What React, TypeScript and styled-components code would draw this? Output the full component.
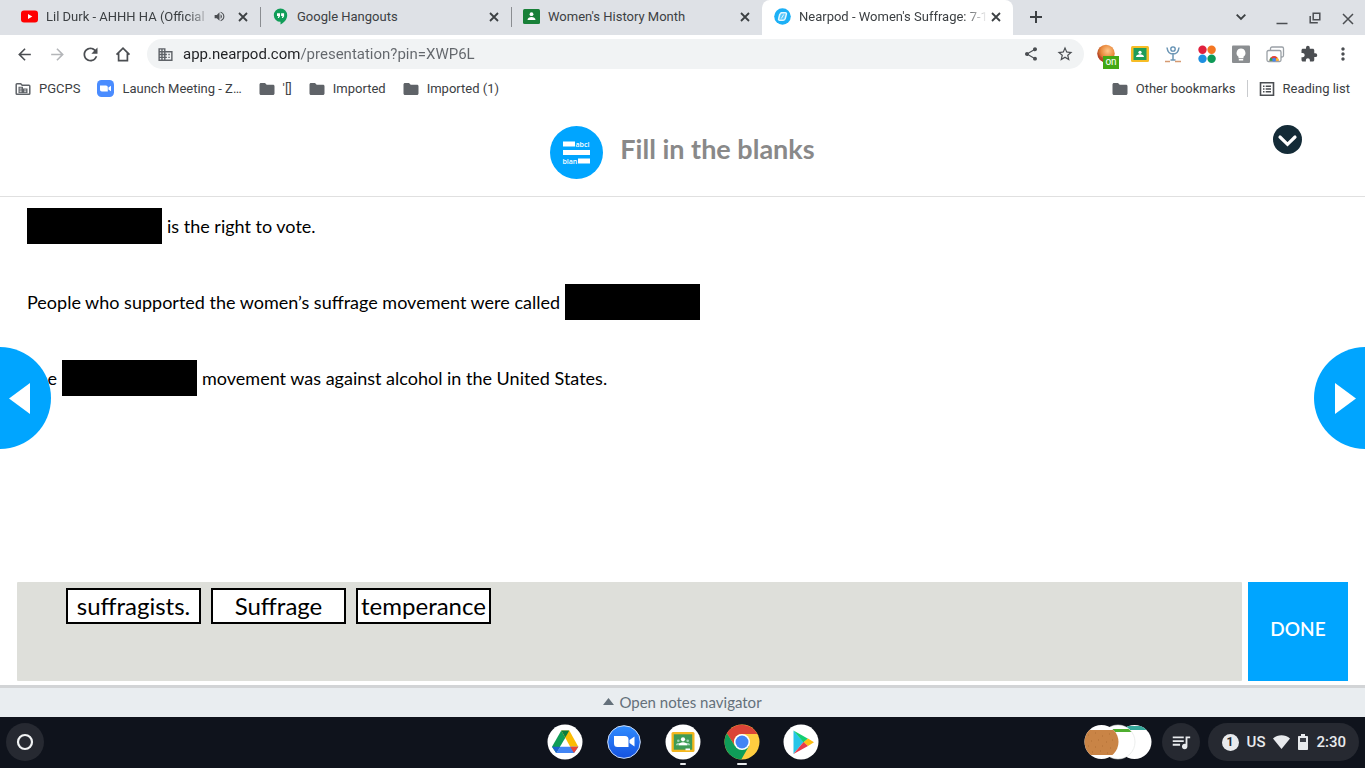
import React from "react";
import styled, { createGlobalStyle } from "styled-components";
import {
  MdArrowBack,
  MdArrowForward,
  MdDomain,
  MdExtension,
  MdMoreVert,
  MdQueueMusic,
  MdRefresh,
  MdShare,
  MdStarBorder,
  MdVolumeUp,
} from "react-icons/md";

const GlobalStyle = createGlobalStyle`
  *, *::before, *::after { box-sizing: border-box; }
  body { margin: 0; background: #fff; }
  button, input { font: inherit; color: inherit; border: 0; padding: 0; margin: 0; background: none; }
  a { color: inherit; text-decoration: none; }
  svg { display: block; flex: none; }
`;

const Screen = styled.div`
  display: flex;
  flex-direction: column;
  min-height: 100vh;
  font-family: Roboto, "Liberation Sans", sans-serif;
  color: #3c4043;
`;

/* ---------- browser chrome ---------- */

const TabStrip = styled.div`
  display: flex;
  height: 35px;
  padding-left: 9px;
  background: #dee1e6;
`;

const Tab = styled.div<{ $active?: boolean; $divided?: boolean }>`
  position: relative;
  display: flex;
  align-items: center;
  flex: 0 1 251px;
  min-width: 0;
  padding: 0 9px 2px 12px;
  border-radius: 8px 8px 0 0;
  background: ${(p) => (p.$active ? "#fff" : "transparent")};

  &::after {
    content: "";
    display: ${(p) => (p.$divided ? "block" : "none")};
    position: absolute;
    right: -1px;
    top: 7px;
    width: 1px;
    height: 20px;
    background: #8a8d91;
  }
`;

const TabButton = styled.button<{ $fade?: boolean }>`
  display: flex;
  align-items: center;
  gap: 8px;
  flex: 1;
  min-width: 0;
  overflow: hidden;
  white-space: nowrap;
  font-size: 13px;
  line-height: 20px;
  text-align: left;
  mask-image: ${(p) =>
    p.$fade ? "linear-gradient(to left, transparent, #000 24px)" : "none"};
`;

const IconButton = styled.button<{ $size?: number; $muted?: boolean }>`
  display: flex;
  align-items: center;
  justify-content: center;
  flex: none;
  width: ${(p) => p.$size ?? 16}px;
  height: ${(p) => p.$size ?? 16}px;
  color: ${(p) => (p.$muted ? "#b4b6b9" : "#4b4e52")};
`;

const TabTools = styled.div`
  display: flex;
  align-items: center;
  gap: 8px;
`;

const NewTab = styled.div`
  display: flex;
  align-items: center;
  padding: 0 0 2px 13px;
`;

const WindowControls = styled.div`
  display: flex;
  align-items: center;
  gap: 17px;
  margin-left: auto;
  padding: 0 9px 2px 0;
`;

const TabSearch = styled(IconButton)`
  margin-right: 8px;
`;

const Toolbar = styled.div`
  display: flex;
  align-items: center;
  height: 38px;
  padding: 0 12px 0 14px;
`;

const NavButtons = styled.div`
  display: flex;
  gap: 13px;
  padding-right: 14px;
`;

const AddressBar = styled.div`
  display: flex;
  align-items: center;
  flex: 1;
  min-width: 0;
  height: 30px;
  padding: 0 10px;
  border-radius: 15px;
  background: #f1f3f4;
`;

const AddressInput = styled.input`
  flex: 1;
  min-width: 0;
  height: 24px;
  margin: 0 9px;
  outline: 0;
  font-size: 15px;
  line-height: 24px;
  color: #3c4043;
  background: linear-gradient(90deg, #202124 117px, #63676c 117px);
  background-clip: text;
  -webkit-background-clip: text;
  -webkit-text-fill-color: transparent;
`;

const AddressActions = styled.div`
  display: flex;
  gap: 16px;
`;

const Extensions = styled.div`
  display: flex;
  align-items: center;
  gap: 14px;
  padding-left: 11px;
`;

const ExtensionButton = styled(IconButton)`
  position: relative;
  width: 20px;
  height: 20px;
`;

const OnBadge = styled.span`
  position: absolute;
  left: 8px;
  top: 12px;
  width: 16px;
  height: 13px;
  background: #43a814;
  color: #fff;
  font-size: 10px;
  line-height: 12px;
  text-align: center;
`;

const Bookmarks = styled.nav`
  display: flex;
  align-items: center;
  height: 31px;
  padding: 0 15px;
  font-size: 13px;
  line-height: 20px;
  white-space: nowrap;
`;

const BookmarkGroup = styled.div<{ $end?: boolean }>`
  display: flex;
  align-items: center;
  gap: ${(p) => (p.$end ? 11 : 17)}px;
  margin-left: ${(p) => (p.$end ? "auto" : 0)};
`;

const Bookmark = styled.a`
  display: flex;
  align-items: center;
  gap: 8px;
`;

const BookmarkDivider = styled.span`
  width: 1px;
  height: 17px;
  background: #c9cbce;
`;

/* ---------- lesson ---------- */

const Lesson = styled.main`
  position: relative;
  display: flex;
  flex-direction: column;
  flex: 1;
  font-family: Lato, "Open Sans", sans-serif;
`;

const LessonHeader = styled.header`
  display: grid;
  grid-template-columns: 1fr auto 1fr;
  align-items: start;
  height: 93px;
  padding: 21px 63px 0;
  border-bottom: 1px solid #e0e0e0;
`;

const LessonTitle = styled.div`
  grid-column: 2;
  display: flex;
  gap: 17px;
`;

const Heading = styled.h1`
  margin: 0;
  color: #898989;
  font-size: 27px;
  font-weight: 700;
  line-height: 48px;
`;

const Collapse = styled.button`
  justify-self: end;
  width: 29px;
  height: 29px;
`;

const Sentences = styled.section`
  display: flex;
  flex-direction: column;
  gap: 40px;
  padding: 11px 27px;
`;

const Sentence = styled.p`
  display: flex;
  align-items: center;
  gap: 5px;
  height: 36px;
  margin: 0;
  color: #000;
  font-size: 18px;
  line-height: 36px;
  white-space: nowrap;
`;

const Blank = styled.button`
  flex: none;
  width: 135px;
  height: 36px;
  background: #000;
`;

const SlideArrow = styled.button<{ $side: "left" | "right" }>`
  position: absolute;
  top: 243px;
  ${(p) => p.$side}: 0;
  display: flex;
  align-items: center;
  justify-content: center;
  width: 51px;
  height: 102px;
  border-radius: ${(p) =>
    p.$side === "left" ? "0 51px 51px 0" : "51px 0 0 51px"};
  background: #00a5ff;
`;

const ArrowGlyph = styled.svg<{ $side: "left" | "right" }>`
  margin-${(p) => (p.$side === "left" ? "right" : "left")}: 12px;
`;

const AnswerArea = styled.section`
  display: flex;
  gap: 6px;
  height: 99px;
  margin: auto 17px 4px;
`;

const WordBank = styled.div`
  display: flex;
  align-items: flex-start;
  gap: 10px;
  flex: 1;
  padding: 6px 49px;
  border-radius: 1px;
  background: #dedfda;
`;

const Word = styled.button`
  width: 135px;
  height: 36px;
  border: 2px solid #000;
  background: #fff;
  color: #000;
  font-size: 24px;
  line-height: 30px;
  text-align: center;
  white-space: nowrap;
`;

const Done = styled.button`
  width: 100px;
  padding-bottom: 6px;
  background: #00a5ff;
  color: #fff;
  font-size: 19px;
  font-weight: 600;
`;

const NotesToggle = styled.button`
  display: flex;
  align-items: center;
  justify-content: center;
  gap: 5px;
  height: 32px;
  padding-bottom: 2px;
  border-top: 3px solid #d2d4d6;
  background: #e9edf0;
  color: #64707a;
  font-size: 15px;
  line-height: 24px;
`;

/* ---------- shelf ---------- */

const Shelf = styled.footer`
  display: grid;
  grid-template-columns: 1fr auto 1fr;
  align-items: center;
  height: 51px;
  padding: 0 6px 1px;
  background: #0f131c;
`;

const RoundButton = styled.button`
  display: flex;
  align-items: center;
  justify-content: center;
  width: 38px;
  height: 38px;
  border-radius: 50%;
  background: #262931;
  color: #e8eaed;
`;

const Apps = styled.div`
  display: flex;
  gap: 23px;
`;

const AppButton = styled.button<{ $bar?: number }>`
  position: relative;
  width: 36px;
  height: 36px;

  &::after {
    content: "";
    position: absolute;
    left: calc(50% - ${(p) => (p.$bar ?? 0) / 2}px);
    top: 39px;
    width: ${(p) => p.$bar ?? 0}px;
    height: 2px;
    border-radius: 1px;
    background: #e8eaed;
  }
`;

const Tray = styled.div`
  display: flex;
  align-items: center;
  justify-content: flex-end;
  gap: 8px;
`;

const Recents = styled.button`
  width: 68px;
  height: 36px;
  margin-right: 2px;
`;

const Status = styled.button`
  display: flex;
  align-items: center;
  gap: 8px;
  height: 38px;
  padding: 0 13px 0 14px;
  border-radius: 19px;
  background: #262931;
  color: #e8eaed;
  font-size: 15px;
  font-weight: 500;
`;

const Count = styled.span`
  width: 17px;
  height: 17px;
  border-radius: 50%;
  background: #e8eaed;
  color: #262931;
  font-size: 12px;
  font-weight: 700;
  line-height: 17px;
`;

/* ---------- drawings ---------- */

const YouTubeLogo = () => (
  <svg width="17" height="17" viewBox="0 0 17 17">
    <rect y="2.5" width="17" height="12" rx="3" fill="#f00" />
    <path d="M7 6v5l4.3-2.5z" fill="#fff" />
  </svg>
);

const HangoutsLogo = () => (
  <svg width="17" height="17" viewBox="0 0 17 17">
    <path d="M8.5.5a6.7 6.7 0 0 0-6.7 6.8 6.6 6.6 0 0 0 6.7 6.5v2.7c3.7-1.8 6.7-5.3 6.7-9.2A6.7 6.7 0 0 0 8.5.5z" fill="#109d58" />
    <path d="M5 5.200h3v3L6.800 10H5.700l.8-1.900H5zM9.100 5.200h3v3L10.900 10H9.800l.8-1.900H9.100z" fill="#fff" />
  </svg>
);

const ClassroomTabLogo = () => (
  <svg width="17" height="15" viewBox="0 0 17 15">
    <rect width="17" height="15" rx="1.5" fill="#188038" />
    <circle cx="8.5" cy="5.200" r="1.9" fill="#fff" />
    <path d="M4.500 11c0-2 2-3 4-3s4 1 4 3z" fill="#fff" />
  </svg>
);

const NearpodLogo = () => (
  <svg width="17" height="17" viewBox="0 0 17 17">
    <circle cx="8.5" cy="8.5" r="8.300" fill="#1cb0f6" />
    <path d="M7.200 4.800h4.200c.8 0 1.200.5 1 1.200l-1.100 4.400c-.3 1.200-1 1.800-2.100 1.800H5.600c-.8 0-1.200-.5-1-1.200l1.100-4.500z" fill="#5cc8fa" stroke="#e2f6ff" strokeWidth="1.500" />
    <path d="M7.300 10.500l2.400-4" stroke="#e2f6ff" strokeWidth="1" />
  </svg>
);

const ZoomBookmarkLogo = () => (
  <svg width="17" height="17" viewBox="0 0 17 17">
    <rect width="17" height="17" rx="4.5" fill="#4a8cff" />
    <path d="M3 5.500h6a1.800 1.800 0 0 1 1.800 1.800v4.200H4.800A1.800 1.800 0 0 1 3 9.700zM11.400 7.500L14 5.700v5.600l-2.600-1.800z" fill="#fff" />
  </svg>
);

const FolderIcon = () => (
  <svg width="16" height="14" viewBox="0 0 16 14">
    <path d="M2 1h4l1.700 1.800H14c.8 0 1.500.6 1.500 1.400v7.300c0 .8-.7 1.500-1.500 1.500H2c-.8 0-1.500-.7-1.500-1.500v-9C.5 1.600 1.200 1 2 1z" fill="#5f6368" />
  </svg>
);

const ManagedFolderIcon = () => (
  <svg width="16" height="14" viewBox="0 0 16 14">
    <path d="M2 1.700h3.700l1.500 1.600H14c.5 0 .8.3.8.8v7.400c0 .5-.3.800-.8.800H2c-.5 0-.8-.3-.8-.8v-9c0-.5.3-.8.8-.8z" fill="none" stroke="#5f6368" strokeWidth="1.500" />
    <path d="M3.500 4.800H8V6.500h4.500v4.500h-9z" fill="#5f6368" />
    <path d="M4.600 6.200h2M4.600 8h2M4.600 9.700h2M9.200 8h2M9.200 9.700h2" stroke="#fff" strokeWidth=".8" />
  </svg>
);

const ReadingListIcon = () => (
  <svg width="16" height="16" viewBox="0 0 16 16" fill="none" stroke="#4b4e52">
    <path d="M1.500 1.700h13v12.600h-13z" strokeWidth="1.600" />
    <path d="M4 5.300h1.500M4 8h1.500M4 10.700h1.500M6.700 5.300H12M6.700 8H12M6.700 10.700H12" strokeWidth="1.400" />
  </svg>
);

const CloseTabIcon = () => (
  <svg width="16" height="16" viewBox="0 0 16 16" fill="none" stroke="#3c4043" strokeWidth="1.800">
    <path d="M4 4l8 8M12 4l-8 8" />
  </svg>
);

const PlusIcon = () => (
  <svg width="20" height="20" viewBox="0 0 20 20" fill="none" stroke="#3c4043" strokeWidth="2">
    <path d="M10 4v12M4 10h12" />
  </svg>
);

const TabSearchIcon = () => (
  <svg width="16" height="16" viewBox="0 0 16 16" fill="none" stroke="#3c4043" strokeWidth="1.900">
    <path d="M3.700 5.700L8 10l4.300-4.300" />
  </svg>
);

const HomeIcon = () => (
  <svg width="20" height="20" viewBox="0 0 20 20" fill="none" stroke="#4b4e52" strokeWidth="1.700">
    <path d="M3.500 10.700L10 4.200l6.500 6.500M5.600 9.200v7.400h8.800V9.200" />
  </svg>
);

const MinimizeIcon = () => (
  <svg width="16" height="16" viewBox="0 0 16 16">
    <path d="M2.500 14.500h11" stroke="#4b4e52" strokeWidth="1.500" />
  </svg>
);

const RestoreIcon = () => (
  <svg width="16" height="16" viewBox="0 0 16 16" fill="none" stroke="#4b4e52" strokeWidth="1.500">
    <path d="M6.200 4.200h6.600v6.600H6.200zM3.200 7v6.800h7.600" />
  </svg>
);

const CloseWindowIcon = () => (
  <svg width="16" height="16" viewBox="0 0 16 16">
    <path d="M3 5l10 10M13 5L3 15" stroke="#4b4e52" strokeWidth="1.500" />
  </svg>
);

const GlobeExtension = () => (
  <svg width="20" height="20" viewBox="0 0 20 20">
    <defs>
      <radialGradient id="globe" cx=".6" cy=".35" r=".7">
        <stop offset="0" stopColor="#ffc98a" />
        <stop offset=".55" stopColor="#e9893d" />
        <stop offset="1" stopColor="#a83a1d" />
      </radialGradient>
    </defs>
    <circle cx="11" cy="9.500" r="8.700" fill="url(#globe)" />
    <path d="M2.500 8c1 3 3 5 6 6l1 4c-4-.5-7-4-7-10z" fill="#b8402a" opacity=".6" />
  </svg>
);

const ClassroomExtension = () => (
  <svg width="20" height="20" viewBox="0 0 20 20">
    <rect x="2" y="2" width="18" height="16" rx="1.500" fill="#f7bd26" />
    <rect x="4.500" y="4" width="13" height="12" fill="#1f9d58" />
    <circle cx="11" cy="8.300" r="1.600" fill="#fff" />
    <path d="M7 13c0-2 2-2.800 4-2.800s4 .8 4 2.800z" fill="#fff" />
  </svg>
);

const FigureExtension = () => (
  <svg width="20" height="20" viewBox="0 0 20 20" fill="none">
    <path d="M4 3.500c.5 4 3 6.500 6 6.500s5.500-2.500 6-6.500M10 9v7M7.500 16h5" stroke="#6c96b5" strokeWidth="1.500" />
    <circle cx="10" cy="5" r="2.200" stroke="#5d8db1" strokeWidth="1.300" />
    <path d="M2 17.500h5M12 17.500h6" stroke="#d59a72" strokeWidth="1.500" />
  </svg>
);

const DotsExtension = () => (
  <svg width="20" height="20" viewBox="0 0 20 20">
    <circle cx="5.500" cy="5.700" r="4.200" fill="#e01f3d" />
    <circle cx="14.600" cy="5.700" r="4.200" fill="#f47621" />
    <circle cx="5.500" cy="14.800" r="4.200" fill="#1d8fe0" />
    <circle cx="14.600" cy="14.800" r="4.200" fill="#0e9a57" />
  </svg>
);

const BulbExtension = () => (
  <svg width="20" height="20" viewBox="0 0 20 20">
    <rect x="1" y="1.500" width="18" height="17.500" rx="1" fill="#8b8e91" />
    <path d="M10 4.500a4.500 4.500 0 0 0-2.500 8.200v1.500h5v-1.500A4.500 4.500 0 0 0 10 4.500zM7.800 15h4.400v1.500H7.800z" fill="#fff" />
  </svg>
);

const RemoteExtension = () => (
  <svg width="20" height="20" viewBox="0 0 20 20">
    <rect x="5.500" y="3" width="13" height="10" rx="1.500" fill="#fff" stroke="#9aa0a6" strokeWidth="1.300" />
    <rect x="2" y="6.500" width="14" height="11" rx="1.500" fill="#fff" stroke="#9aa0a6" strokeWidth="1.300" />
    <path d="M4.500 16.700a4.600 4.600 0 0 1 9.200 0z" fill="#e34133" />
    <path d="M4.500 16.700a4.600 4.600 0 0 1 1.300-3.200L9 16.700z" fill="#23a455" />
    <path d="M13.700 16.700a4.600 4.600 0 0 0-1.300-3.200L9 16.700z" fill="#f9bf2c" />
    <circle cx="9.100" cy="15.700" r="1.900" fill="#4285f4" />
  </svg>
);

const FillBlanksLogo = () => (
  <svg width="53" height="55" viewBox="0 0 53 55">
    <circle cx="26.500" cy="27.500" r="26.500" fill="#00a5ff" />
    <path d="M13 16.500h12v5H13zM13 25h27v5H13zM28 33.500h12v5H28z" fill="#fff" />
    <text x="25.500" y="21.500" fontFamily="Open Sans, sans-serif" fontSize="7" fontWeight="600" fill="#fff">abcl</text>
    <text x="12.500" y="38.500" fontFamily="Open Sans, sans-serif" fontSize="7" fontWeight="600" fill="#fff">blan</text>
  </svg>
);

const ChevronDisc = () => (
  <svg width="29" height="29" viewBox="0 0 29 29">
    <circle cx="14.500" cy="14.500" r="14.500" fill="#142b37" />
    <path d="M7 12l7.500 7.300L22 12" fill="none" stroke="#fff" strokeWidth="3.200" strokeLinecap="round" />
  </svg>
);

const DriveLogo = () => (
  <svg width="36" height="36" viewBox="0 0 36 36">
    <circle cx="18" cy="18" r="17.500" fill="#fff" />
    <path d="M14.300 6.500L5 22.700l4.200 6.300 9.300-15.500z" fill="#109d58" />
    <path d="M14.300 6.500h8l9 16.200h-8.100z" fill="#fbbc04" />
    <path d="M14.300 6.500h8l-4 7z" fill="#0a7d3e" />
    <path d="M9.200 29l4.200-6.300h18L27 29z" fill="#4285f4" />
    <path d="M5 22.700h8.400L9.200 29z" fill="#1c62d0" />
    <path d="M23.200 22.700h8.100L27 29z" fill="#ea4335" />
  </svg>
);

const ZoomLogo = () => (
  <svg width="36" height="36" viewBox="0 0 36 36">
    <defs>
      <linearGradient id="zoomBlue" x1="0" y1="0" x2="0" y2="1">
        <stop offset="0" stopColor="#2f8cff" />
        <stop offset="1" stopColor="#1552e0" />
      </linearGradient>
    </defs>
    <circle cx="18" cy="18" r="16.300" fill="url(#zoomBlue)" stroke="#cfe0fb" strokeWidth="1" />
    <path d="M8 12h11a3.500 3.500 0 0 1 3.500 3.500V23h-11A3.500 3.500 0 0 1 8 19.500zM23.500 16l5-3.600v10.200l-5-3.600z" fill="#fff" />
  </svg>
);

const ClassroomLogo = () => (
  <svg width="36" height="36" viewBox="0 0 36 36">
    <circle cx="18" cy="18" r="17.500" fill="#fff" />
    <rect x="6.500" y="8" width="23" height="20" rx="1.500" fill="#f4b71f" />
    <rect x="8.800" y="10.300" width="18.400" height="15.400" fill="#3f9b55" />
    <circle cx="18" cy="15.300" r="2.100" fill="#fff" />
    <circle cx="13.300" cy="16.800" r="1.300" fill="#9fd3b5" />
    <circle cx="22.700" cy="16.800" r="1.300" fill="#9fd3b5" />
    <path d="M10.800 21.300c0-1.800 1.500-2.300 3-2.300h8.400c1.500 0 3 .5 3 2.300z" fill="#9fd3b5" />
    <path d="M13.800 21.300c0-2.300 2-3 4.200-3s4.200.7 4.200 3z" fill="#fff" />
    <path d="M20.500 24.500H25v1.800h-4.500z" fill="#fff" />
  </svg>
);

const ChromeLogo = () => (
  <svg width="36" height="36" viewBox="0 0 36 36">
    <circle cx="18" cy="18" r="17.500" fill="#ffcd40" />
    <path d="M2.850 9.250A17.500 17.500 0 0 1 33.400 10H18a8 8 0 0 0-7 12z" fill="#db4437" />
    <path d="M2.850 9.250A17.500 17.500 0 0 0 17.300 35.500L25 22l-14 0z" fill="#0f9d58" />
    <circle cx="18" cy="18" r="8" fill="#fff" />
    <circle cx="18" cy="18" r="6.500" fill="#4285f4" />
  </svg>
);

const PlayLogo = () => (
  <svg width="36" height="36" viewBox="0 0 36 36">
    <circle cx="18" cy="18" r="17.500" fill="#fff" />
    <path d="M10.500 6.500L20.500 18l-10 12z" fill="#27c5e8" />
    <path d="M10.500 6.500L25 14.700l-4.500 3.800z" fill="#13ce72" />
    <path d="M25 14.500l6 3.700-6 3.900-4.500-3.900z" fill="#fdbd12" />
    <path d="M10.500 30l10-12 4.500 4z" fill="#e73b4c" />
  </svg>
);

const RecentFiles = () => (
  <svg width="68" height="36" viewBox="0 0 68 36">
    <defs>
      <clipPath id="diskA"><circle cx="17.500" cy="18" r="17" /></clipPath>
      <clipPath id="diskB"><circle cx="34" cy="18" r="17" /></clipPath>
      <clipPath id="diskC"><circle cx="50.500" cy="18" r="17" /></clipPath>
    </defs>
    <g clipPath="url(#diskC)">
      <path d="M33 0h35v36H33z" fill="#fff" />
      <path d="M33 2h35v4H33z" fill="#37a99b" />
    </g>
    <g clipPath="url(#diskB)">
      <path d="M17 0h35v36H17z" fill="#fff" />
      <path d="M17 5h35v3H17z" fill="#4fae2f" />
    </g>
    <circle cx="34" cy="18" r="17" fill="none" stroke="#dfe3e0" strokeWidth=".6" />
    <g clipPath="url(#diskA)">
      <path d="M0 0h35v36H0z" fill="#fff" />
      <path d="M0 6h35v25H0z" fill="#c98446" />
      <path d="M4 11h1M11 9h1M18 12h1M25 10h1M7 17h1M14 16h1M22 18h1M28 16h1M4 22h1M11 23h1M18 22h1M26 24h1M8 28h1M16 27h1M23 29h1" stroke="#b06f35" strokeWidth="1" />
    </g>
  </svg>
);

const WifiIcon = () => (
  <svg width="17" height="14" viewBox="0 0 17 14">
    <path d="M8.500 14L0 3.500C5-.9 12-.9 17 3.500z" fill="#e8eaed" />
  </svg>
);

const BatteryIcon = () => (
  <svg width="10" height="16" viewBox="0 0 10 16">
    <path d="M3 0h4v2h2c.6 0 1 .4 1 1v12c0 .6-.4 1-1 1H1c-.6 0-1-.4-1-1V3c0-.6.400-1 1-1h2z" fill="#e8eaed" />
    <path d="M2 4h6v4H2z" fill="#3b3e46" />
  </svg>
);

const LauncherIcon = () => (
  <svg width="18" height="18" viewBox="0 0 18 18">
    <circle cx="9" cy="9" r="7" fill="none" stroke="#f1f3f4" strokeWidth="2.200" />
  </svg>
);

/* ---------- data ---------- */

const tabs = [
  { title: "Lil Durk - AHHH HA (Official", icon: <YouTubeLogo />, fade: true, audio: true, divided: true },
  { title: "Google Hangouts", icon: <HangoutsLogo />, divided: true },
  { title: "Women's History Month", icon: <ClassroomTabLogo /> },
  { title: "Nearpod - Women's Suffrage: 7-1", icon: <NearpodLogo />, fade: true, active: true },
];

const bookmarks = [
  { label: "PGCPS", icon: <ManagedFolderIcon /> },
  { label: "Launch Meeting - Z…", icon: <ZoomBookmarkLogo /> },
  { label: "'[]", icon: <FolderIcon /> },
  { label: "Imported", icon: <FolderIcon /> },
  { label: "Imported (1)", icon: <FolderIcon /> },
];

const extensions = [
  { name: "Focus", icon: <GlobeExtension />, badge: "on" },
  { name: "Share to Classroom", icon: <ClassroomExtension /> },
  { name: "Reader", icon: <FigureExtension /> },
  { name: "Launcher", icon: <DotsExtension /> },
  { name: "Ideas", icon: <BulbExtension /> },
  { name: "Remote", icon: <RemoteExtension /> },
  { name: "Extensions", icon: <MdExtension size={18} /> },
  { name: "Menu", icon: <MdMoreVert size={20} /> },
];

const apps = [
  { name: "Drive", icon: <DriveLogo /> },
  { name: "Zoom", icon: <ZoomLogo /> },
  { name: "Classroom", icon: <ClassroomLogo />, bar: 6 },
  { name: "Chrome", icon: <ChromeLogo />, bar: 10 },
  { name: "Play Store", icon: <PlayLogo /> },
];

const words = ["suffragists.", "Suffrage", "temperance"];

export default function App() {
  return (
    <Screen>
      <GlobalStyle />
      <TabStrip>
        {tabs.map((t) => (
          <Tab key={t.title} $active={t.active} $divided={t.divided}>
            <TabButton $fade={t.fade}>
              {t.icon}
              <span>{t.title}</span>
            </TabButton>
            <TabTools>
              {t.audio && (
                <IconButton aria-label="Mute tab"><MdVolumeUp size={13} /></IconButton>
              )}
              <IconButton aria-label="Close tab"><CloseTabIcon /></IconButton>
            </TabTools>
          </Tab>
        ))}
        <NewTab>
          <IconButton $size={20} aria-label="New tab"><PlusIcon /></IconButton>
        </NewTab>
        <WindowControls>
          <TabSearch aria-label="Search tabs"><TabSearchIcon /></TabSearch>
          <IconButton aria-label="Minimize"><MinimizeIcon /></IconButton>
          <IconButton aria-label="Restore"><RestoreIcon /></IconButton>
          <IconButton aria-label="Close window"><CloseWindowIcon /></IconButton>
        </WindowControls>
      </TabStrip>

      <Toolbar>
        <NavButtons>
          <IconButton $size={20} aria-label="Back"><MdArrowBack size={19} /></IconButton>
          <IconButton $size={20} $muted aria-label="Forward"><MdArrowForward size={19} /></IconButton>
          <IconButton $size={20} aria-label="Reload"><MdRefresh size={21} /></IconButton>
          <IconButton $size={20} aria-label="Home"><HomeIcon /></IconButton>
        </NavButtons>
        <AddressBar>
          <MdDomain size={17} color="#5f6368" />
          <AddressInput aria-label="Address" defaultValue="app.nearpod.com/presentation?pin=XWP6L" />
          <AddressActions>
            <IconButton $size={18} aria-label="Share"><MdShare size={16} /></IconButton>
            <IconButton $size={18} aria-label="Bookmark this page"><MdStarBorder size={18} /></IconButton>
          </AddressActions>
        </AddressBar>
        <Extensions>
          {extensions.map((e) => (
            <ExtensionButton key={e.name} aria-label={e.name}>
              {e.icon}
              {e.badge && <OnBadge>{e.badge}</OnBadge>}
            </ExtensionButton>
          ))}
        </Extensions>
      </Toolbar>

      <Bookmarks>
        <BookmarkGroup>
          {bookmarks.map((b) => (
            <Bookmark key={b.label} href="#">{b.icon}{b.label}</Bookmark>
          ))}
        </BookmarkGroup>
        <BookmarkGroup $end>
          <Bookmark href="#"><FolderIcon />Other bookmarks</Bookmark>
          <BookmarkDivider />
          <Bookmark href="#"><ReadingListIcon />Reading list</Bookmark>
        </BookmarkGroup>
      </Bookmarks>

      <Lesson>
        <LessonHeader>
          <LessonTitle>
            <FillBlanksLogo />
            <Heading>Fill in the blanks</Heading>
          </LessonTitle>
          <Collapse aria-label="Collapse"><ChevronDisc /></Collapse>
        </LessonHeader>
        <Sentences>
          <Sentence>
            <Blank aria-label="Blank 1" />
            <span>is the right to vote.</span>
          </Sentence>
          <Sentence>
            <span>People who supported the women’s suffrage movement were called</span>
            <Blank aria-label="Blank 2" />
          </Sentence>
          <Sentence>
            <span>The</span>
            <Blank aria-label="Blank 3" />
            <span>movement was against alcohol in the United States.</span>
          </Sentence>
        </Sentences>
        <SlideArrow $side="left" aria-label="Previous slide">
          <ArrowGlyph $side="left" width="21" height="31" viewBox="0 0 21 31">
            <path d="M21 0v31L0 15.500z" fill="#fff" />
          </ArrowGlyph>
        </SlideArrow>
        <SlideArrow $side="right" aria-label="Next slide">
          <ArrowGlyph $side="right" width="21" height="31" viewBox="0 0 21 31">
            <path d="M0 0v31l21-15.500z" fill="#fff" />
          </ArrowGlyph>
        </SlideArrow>
        <AnswerArea>
          <WordBank>
            {words.map((w) => <Word key={w}>{w}</Word>)}
          </WordBank>
          <Done>DONE</Done>
        </AnswerArea>
        <NotesToggle>
          <svg width="11" height="7" viewBox="0 0 11 7"><path d="M5.500 0L11 7H0z" fill="#64707a" /></svg>
          Open notes navigator
        </NotesToggle>
      </Lesson>

      <Shelf>
        <RoundButton aria-label="Launcher"><LauncherIcon /></RoundButton>
        <Apps>
          {apps.map((a) => (
            <AppButton key={a.name} $bar={a.bar} aria-label={a.name}>{a.icon}</AppButton>
          ))}
        </Apps>
        <Tray>
          <Recents aria-label="Recent files"><RecentFiles /></Recents>
          <RoundButton aria-label="Media controls"><MdQueueMusic size={22} /></RoundButton>
          <Status>
            <Count>1</Count>
            <span>US</span>
            <WifiIcon />
            <BatteryIcon />
            <span>2:30</span>
          </Status>
        </Tray>
      </Shelf>
    </Screen>
  );
}
